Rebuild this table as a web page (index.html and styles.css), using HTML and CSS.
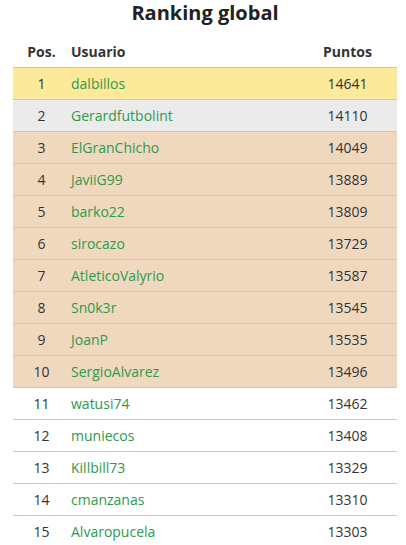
FILE: index.html
```html
<!DOCTYPE html>
<html>
<head>
<meta charset="utf-8">
<link rel="stylesheet" href="styles.css">
</head>
<body>
<div class="page">
  <h1 class="title">Ranking global</h1>
  <table class="ranking">
    <thead>
      <tr><th class="pos">Pos.</th><th class="user">Usuario</th><th class="pts">Puntos</th></tr>
    </thead>
    <tbody>
      <tr class="gold"><td class="pos">1</td><td class="user"><a href="#">dalbillos</a></td><td class="pts">14641</td></tr>
      <tr class="silver"><td class="pos">2</td><td class="user"><a href="#">Gerardfutbolint</a></td><td class="pts">14110</td></tr>
      <tr class="top"><td class="pos">3</td><td class="user"><a href="#">ElGranChicho</a></td><td class="pts">14049</td></tr>
      <tr class="top"><td class="pos">4</td><td class="user"><a href="#">JaviiG99</a></td><td class="pts">13889</td></tr>
      <tr class="top"><td class="pos">5</td><td class="user"><a href="#">barko22</a></td><td class="pts">13809</td></tr>
      <tr class="top"><td class="pos">6</td><td class="user"><a href="#">sirocazo</a></td><td class="pts">13729</td></tr>
      <tr class="top"><td class="pos">7</td><td class="user"><a href="#">AtleticoValyrio</a></td><td class="pts">13587</td></tr>
      <tr class="top"><td class="pos">8</td><td class="user"><a href="#">Sn0k3r</a></td><td class="pts">13545</td></tr>
      <tr class="top"><td class="pos">9</td><td class="user"><a href="#">JoanP</a></td><td class="pts">13535</td></tr>
      <tr class="top"><td class="pos">10</td><td class="user"><a href="#">SergioAlvarez</a></td><td class="pts">13496</td></tr>
      <tr><td class="pos">11</td><td class="user"><a href="#">watusi74</a></td><td class="pts">13462</td></tr>
      <tr><td class="pos">12</td><td class="user"><a href="#">muniecos</a></td><td class="pts">13408</td></tr>
      <tr><td class="pos">13</td><td class="user"><a href="#">Killbill73</a></td><td class="pts">13329</td></tr>
      <tr><td class="pos">14</td><td class="user"><a href="#">cmanzanas</a></td><td class="pts">13310</td></tr>
      <tr><td class="pos">15</td><td class="user"><a href="#">Alvaropucela</a></td><td class="pts">13303</td></tr>
    </tbody>
  </table>
</div>
</body>
</html>
```
FILE: styles.css
```css
html, body {
  margin: 0;
  padding: 0;
  background: #ffffff;
}
body {
  font-family: "Open Sans", "Liberation Sans", sans-serif;
  color: #333333;
}
.page {
  padding: 0 9px 0 13px;
}
.title {
  margin: 0;
  height: 28px;
  line-height: 25px;
  font-size: 20px;
  font-weight: 700;
  text-align: center;
  color: #222222;
}
.ranking {
  width: 384px;
  border-collapse: collapse;
  font-size: 14px;
  table-layout: fixed;
}
.ranking th {
  height: 33px;
  padding: 0 0 6px 0;
  line-height: 19px;
  font-weight: 700;
  color: #333333;
  text-align: left;
  vertical-align: bottom;
}
.ranking td {
  height: 31px;
  padding: 0;
  border-top: 1px solid #c8c8c8;
  vertical-align: middle;
  color: #333333;
}
.ranking .pos {
  width: 57px;
  text-align: center;
}
.ranking .user {
  padding-left: 1px;
  text-align: left;
}
.ranking .pts {
  width: 99px;
  text-align: center;
}
.ranking a {
  color: #2e9a4c;
  text-decoration: none;
}
.gold td { background: #fde99a; }
.silver td { background: #ebebeb; }
.top td { background: #f0d8bf; }
```
